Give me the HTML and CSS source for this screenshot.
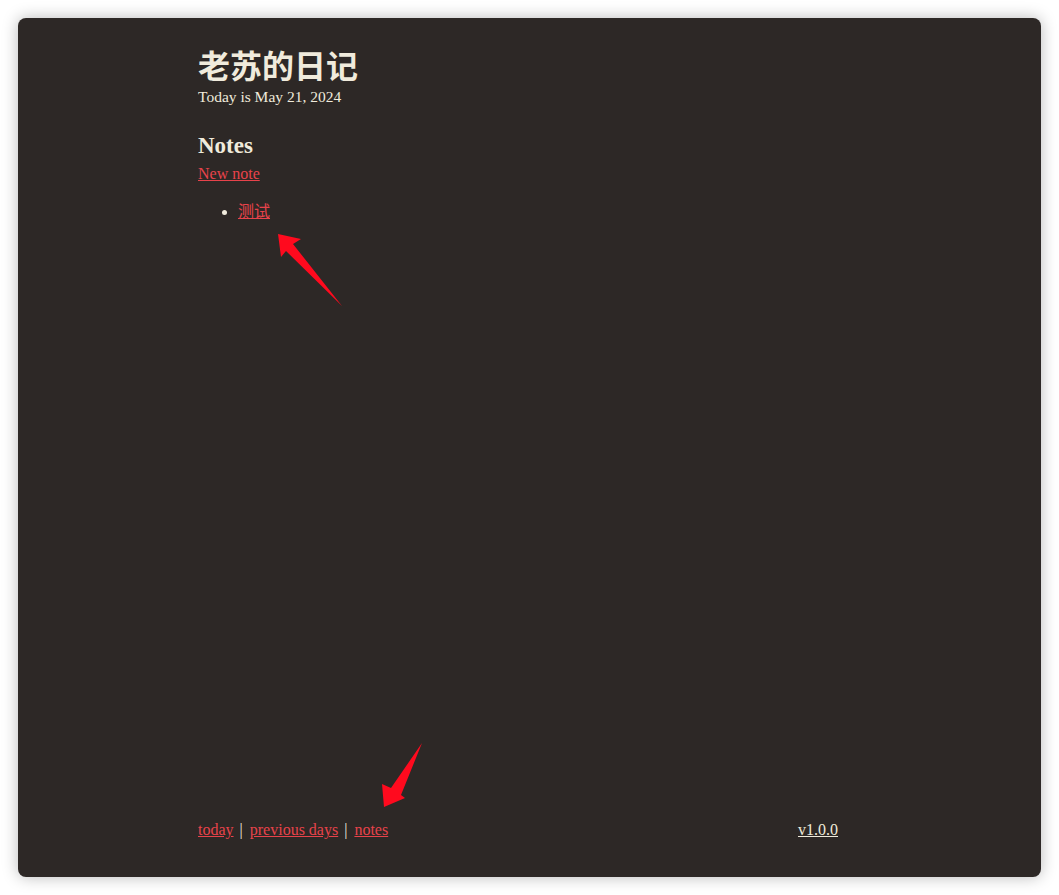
FILE: index.html
```html
<!DOCTYPE html>
<html lang="zh">
<head>
<meta charset="utf-8">
<title>老苏的日记</title>
<link rel="stylesheet" href="styles.css">
</head>
<body>
<div class="window">
  <div class="page">
    <main class="content">
      <h1 class="title">老苏的日记</h1>
      <p class="date">Today is May 21, 2024</p>
      <h2 class="heading">Notes</h2>
      <a class="link" href="#">New note</a>
      <ul class="notes">
        <li><a class="link" href="#">测试</a></li>
      </ul>
    </main>
    <footer class="footer">
      <nav class="nav">
        <a class="link" href="#">today</a><span class="sep">|</span><a class="link" href="#">previous days</a><span class="sep">|</span><a class="link" href="#">notes</a>
      </nav>
      <a class="version" href="#">v1.0.0</a>
    </footer>
  </div>
  <svg class="annotations" viewBox="0 0 1023 859" width="1023" height="859" aria-hidden="true">
    <polygon points="260,216 283,221 275,226 324,288 268,233 263,239" fill="#ff0a1e"/>
    <polygon points="404,725 383,777 387,780 366,789 364,766 373,770" fill="#ff0a1e"/>
  </svg>
</div>
</body>
</html>
```

FILE: styles.css
```css
html, body {
  margin: 0;
  padding: 0;
  background: #ffffff;
}

body {
  padding: 18px;
  font-family: "Liberation Serif", "Noto Sans CJK SC", serif;
  color: #f0ebdc;
}

.window {
  position: relative;
  width: 1023px;
  height: 859px;
  background: #2d2826;
  border-radius: 8px;
  box-shadow: 0 0 16px rgba(0, 0, 0, 0.28);
  overflow: hidden;
}

.page {
  box-sizing: border-box;
  height: 100%;
  width: 820px;
  padding: 27px 0 37px 180px;
  display: flex;
  flex-direction: column;
}

.content {
  flex: 1;
  display: flex;
  flex-direction: column;
  align-items: flex-start;
}

.title {
  margin: 0;
  font-family: "Noto Sans CJK SC", sans-serif;
  font-size: 32px;
  font-weight: 700;
  line-height: 38px;
  letter-spacing: 0;
  color: #f0ebdc;
}

.date {
  margin: 4px 0 0;
  font-size: 15.5px;
  line-height: 20px;
}

.heading {
  margin: 24px 0 0;
  font-size: 23px;
  font-weight: 700;
  line-height: 30px;
}

.link {
  color: #e8434b;
  text-decoration: underline;
  font-size: 16px;
  line-height: 20px;
}

.content > .link {
  margin-top: 3px;
}

.notes {
  margin: 16px 0 0;
  padding-left: 40px;
  font-size: 16px;
  line-height: 20px;
}

.notes li::marker {
  color: #f0ebdc;
}

.notes .link {
  font-family: "Noto Sans CJK SC", sans-serif;
  font-size: 16px;
}

.footer {
  display: flex;
  justify-content: space-between;
  align-items: center;
  width: 640px;
  font-size: 16px;
  line-height: 20px;
}

.sep {
  padding: 0 7px 0 6px;
  color: #f0ebdc;
}

.version {
  color: #f0ebdc;
  text-decoration: underline;
}

.annotations {
  position: absolute;
  left: 0;
  top: 0;
  pointer-events: none;
}
```
